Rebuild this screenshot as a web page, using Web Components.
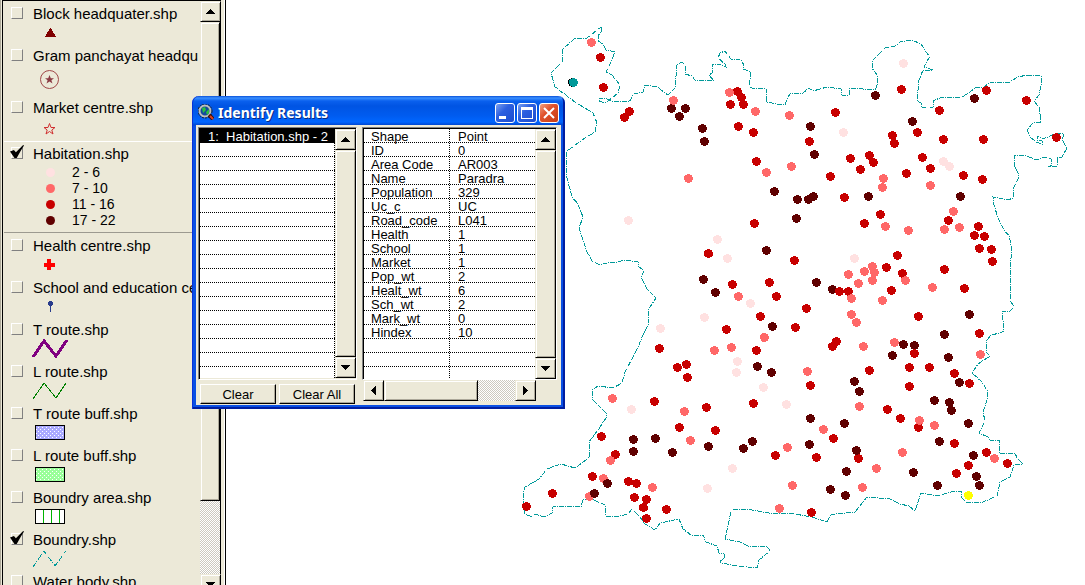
<!DOCTYPE html>
<html lang="en">
<head>
<meta charset="utf-8">
<title>Habitation map</title>
<style>
  html, body { margin: 0; height: 100%; overflow: hidden; background: #fff; }
  body { font-family: "Liberation Sans", Arial, sans-serif; font-size: 15px; color: #000; }
</style>
</head>
<body>
<gis-workspace>
  <legend-panel slot="legend">
    <legend-layer label="Block headquater.shp">
      <svg width="36" height="22" shape-rendering="crispEdges"><path d="M18 4h1l5 9H13z" fill="#800000"/></svg>
    </legend-layer>
    <legend-layer label="Gram panchayat headqu" tall>
      <svg width="36" height="32"><circle cx="17.500" cy="13.500" r="9" fill="none" stroke="#a04848"/><path d="M17.500 9l1.300 3.200h3.200l-2.600 2.100 1.100 3.200-3-2-3 2 1.100-3.200L13 12.200h3.200z" fill="#8c3c44"/></svg>
    </legend-layer>
    <legend-layer label="Market centre.shp">
      <svg width="36" height="22"><path d="M17.500 5.500l1.500 4h4l-3.200 2.500 1.200 4-3.500-2.500L14 16l1.200-4L12 9.500h4z" fill="none" stroke="#d03030"/></svg>
    </legend-layer>
    <legend-layer label="Habitation.shp" checked active>
      <legend-class color="#ffe1e1">2 - 6</legend-class>
      <legend-class color="#ff6868">7 - 10</legend-class>
      <legend-class color="#c80000">11 - 16</legend-class>
      <legend-class color="#600000">17 - 22</legend-class>
    </legend-layer>
    <legend-layer label="Health centre.shp">
      <svg width="36" height="22" shape-rendering="crispEdges"><path d="M15 3h4v4h4v4h-4v3h-4v-3h-3V7h3z" fill="#f00"/></svg>
    </legend-layer>
    <legend-layer label="School and education ce">
      <svg width="36" height="22" shape-rendering="crispEdges"><path d="M17 3h3v1h1v3h-1v1h-1v6h-1V8h-1V7h-1V4h1z" fill="#283c8c"/></svg>
    </legend-layer>
    <legend-layer label="T route.shp">
      <svg width="36" height="22" shape-rendering="crispEdges"><path d="M1 17L12 1l12 15L35 0" fill="none" stroke="#800080" stroke-width="3"/></svg>
    </legend-layer>
    <legend-layer label="L route.shp">
      <svg width="36" height="22" shape-rendering="crispEdges"><path d="M1 17L12 1l12 15L34 1" fill="none" stroke="#008000"/></svg>
    </legend-layer>
    <legend-layer label="T route buff.shp">
      <svg width="36" height="22" shape-rendering="crispEdges"><defs><pattern id="d" width="4" height="4" patternUnits="userSpaceOnUse"><rect width="4" height="4" fill="#aaaaff"/><path d="M0 1h1v1H0zM2 3h1v1H2z" fill="#fff"/></pattern></defs><path d="M3 1h30v15H3z"/><path d="M4 2h28v13H4z" fill="url(#d)"/></svg>
    </legend-layer>
    <legend-layer label="L route buff.shp">
      <svg width="36" height="22" shape-rendering="crispEdges"><defs><pattern id="g" width="4" height="4" patternUnits="userSpaceOnUse"><rect width="4" height="4" fill="#99ff99"/><path d="M0 1h1v1H0zM2 3h1v1H2z" fill="#fff"/></pattern></defs><path d="M3 1h30v15H3z"/><path d="M4 2h28v13H4z" fill="url(#g)"/></svg>
    </legend-layer>
    <legend-layer label="Boundry area.shp">
      <svg width="36" height="22" shape-rendering="crispEdges"><path d="M3 1h30v15H3z"/><path d="M4 2h28v13H4z" fill="#fff"/><path d="M11 2h1v13h-1zM19 2h1v13h-1zM27 2h1v13h-1z" fill="#00b400"/></svg>
    </legend-layer>
    <legend-layer label="Boundry.shp" checked>
      <svg width="36" height="22" shape-rendering="crispEdges"><path d="M1 17L12 1l11 15L34 1" fill="none" stroke="#009999" stroke-dasharray="5 1 1 2"/></svg>
    </legend-layer>
    <legend-layer label="Water body.shp"></legend-layer>
  </legend-panel>
  <gis-map slot="map"></gis-map>
  <identify-window slot="window" heading="Identify Results"></identify-window>
</gis-workspace>

<script>
const define = (name, html, setup) => {
  const template = document.createElement('template');
  template.innerHTML = html;
  customElements.define(name, class extends HTMLElement {
    constructor() {
      super();
      this.attachShadow({ mode: 'open' }).append(template.content.cloneNode(true));
    }
    connectedCallback() { if (setup) setup(this, this.shadowRoot); }
  });
};

/* Bevelled scroll bar; --thumb and --rest share out the length of the track. */
define('bevel-scroll', `
<style>
  :host { display: flex; flex-direction: column; width: 21px; box-sizing: border-box; }
  :host([horizontal]) { flex-direction: row; width: auto; height: 21px; }
  button, .thumb {
    box-sizing: border-box; margin: 0; padding: 0; background: #ece9d8; border-radius: 0;
    border: 1px solid; border-color: #ece9d8 #000 #000 #ece9d8;
    box-shadow: inset 1px 1px #fff, inset -1px -1px #aca899;
  }
  button { flex: none; width: 21px; height: 21px; display: grid; place-items: center; }
  .thumb { flex: var(--thumb, 1) 1 0px; }
  .rest { flex: var(--rest, 0) 1 0px; background: conic-gradient(#fff 25%, #ccc9bf 0 50%, #fff 0 75%, #ccc9bf 0) 0 0 / 2px 2px; }
  svg { display: block; }
  :host([horizontal]) svg { transform: rotate(-90deg); }
</style>
<button class="a" aria-label="Scroll back"><svg width="9" height="5" shape-rendering="crispEdges"><path d="M4 0h1l4 5H0z"/></svg></button>
<div class="thumb"></div><div class="rest"></div>
<button class="b" aria-label="Scroll on"><svg width="9" height="5" shape-rendering="crispEdges"><path d="M0 0h9L5 5H4z"/></svg></button>`);

define('legend-class', `
<style>
  :host { display: flex; align-items: center; height: 16px; font-size: 14px; line-height: 16px; }
  i { width: 9px; height: 9px; border-radius: 50%; margin: 0 17px 0 14px; }
</style>
<i></i><span><slot></slot></span>`, (host, root) => {
  root.querySelector('i').style.background = host.getAttribute('color');
});

define('legend-layer', `
<style>
  :host { display: block; box-sizing: border-box; min-height: 42px; padding-left: 7px; }
  :host([active]) { margin: 1px 0 3px; padding: 2px 0 4px 7px; border-top: 1px solid #fff; border-bottom: 1px solid #9c9a90; }
  .head { display: flex; align-items: center; gap: 10px; height: 20px; }
  label { line-height: 20px; white-space: nowrap; }
  input { appearance: none; flex: none; box-sizing: border-box; width: 12px; height: 12px; margin: 0 0 2px; border: 1px solid; border-color: #fff #808080 #808080 #fff; position: relative; }
  input:checked::before { content: ""; position: absolute; left: -2px; top: -3px; width: 14px; height: 13px; background: #000; clip-path: polygon(0 50%, 28% 38%, 42% 56%, 94% 0, 100% 4%, 76% 46%, 48% 100%, 32% 100%); }
  .body { padding-left: 21px; }
  ::slotted(svg) { display: block; overflow: visible; }
</style>
<div class="head"><input type="checkbox" id="on"><label for="on"></label></div>
<div class="body"><slot></slot></div>`, (host, root) => {
  root.querySelector('label').textContent = host.getAttribute('label');
  root.querySelector('input').checked = host.hasAttribute('checked');
});

define('legend-panel', `
<style>
  :host { display: grid; grid-template-columns: 1fr 21px; box-sizing: border-box; width: 226px; height: calc(100% + 10px); background: #ece9d8;
    padding: 0 5px 0 2px; border-right: 0; box-shadow: inset -1px 0 #000, inset -2px 0 #fff, inset 1px 0 #aca899; }
  .list { overflow: hidden; min-width: 0; border-left: 1px solid #000; border-top: 1px solid #000; padding: 3px 0 0 1px; }
  bevel-scroll { --thumb: 478; --rest: 73; border-right: 1px solid #000; border-top: 1px solid #000; width: 21px; }
</style>
<div class="list"><slot></slot></div>
<bevel-scroll></bevel-scroll>`);

const BOUNDARY = `601,27 602,30 598,36 598,41 603,44 606,50 615,52 611,62 606,72 612,75 620,85 618,93 612,98 605,103 599,101 599,98 607,99 612,101 623,101 629,102 634,94 643,92 645,85 657,87 668,95 675,88 677,65 681,62 686,65 685,74 692,76 695,80 707,80 714,81 709,75 712,73 712,64 720,64 726,67 725,64 718,58 720,53 725,51 731,59 740,59 744,65 743,69 751,72 749,86 753,89 760,88 766,89 767,102 777,104 785,105 788,97 791,93 803,93 809,88 813,91 827,87 841,89 842,95 849,95 850,88 875,90 878,83 877,75 872,68 873,60 885,48 895,46 900,42 912,40 921,44 926,52 930,57 927,61 924,67 933,70 923,70 919,80 917,101 921,103 922,108 933,107 933,101 942,97 961,98 977,87 984,87 990,82 1008,83 1018,77 1027,75 1041,76 1041,85 1039,95 1034,101 1039,107 1041,122 1033,123 1027,130 1030,137 1036,142 1042,144 1042,141 1037,140 1037,136 1043,139 1057,133 1064,134 1062,140 1067,148 1062,157 1057,157 1057,166 1048,167 1052,165 1051,159 1045,157 1037,160 1023,155 1015,155 1014,165 1018,173 1018,179 1014,187 1013,198 1008,200 993,197 994,205 998,218 1005,232 1009,235 1012,250 1010,267 1010,300 1014,307 1010,311 1002,311 1004,331 1000,333 991,335 987,340 986,352 990,356 978,364 972,373 982,382 988,392 987,400 983,412 985,421 979,433 988,437 990,440 999,440 1000,454 1015,453 1017,458 1023,464 1014,465 1010,477 1000,482 997,496 983,502 966,502 961,497 962,492 954,491 938,496 921,493 915,511 909,506 900,504 890,499 867,497 855,512 836,514 831,514 827,522 812,517 789,513 774,514 752,510 735,509 731,512 725,539 740,542 750,547 767,546 770,551 759,560 757,568 738,566 721,563 720,561 725,558 724,554 719,553 717,546 706,542 703,535 691,535 683,529 679,519 660,523 655,530 645,524 640,517 632,509 628,514 615,517 606,516 605,505 594,500 583,499 581,507 566,506 553,507 552,513 544,517 535,514 532,517 525,514 523,495 525,487 539,479 547,469 561,464 575,468 590,457 589,442 598,430 606,418 606,413 593,400 592,390 598,386 613,388 622,383 625,372 633,357 639,345 642,337 649,323 648,310 656,298 647,289 641,277 644,271 638,266 638,262 625,260 614,263 610,262 600,265 592,261 587,252 583,240 579,228 583,217 578,204 572,197 567,178 566,165 567,151 582,140 595,132 597,123 593,113 575,102 555,87 551,73 562,62 562,50 575,38 587,38`;

const HABITATIONS = [
  ['#600000', `671,108 685,108 679,116 702,128 704,141 810,126 814,154 774,191 797,199 808,199 813,196 868,196 875,95 796,218 974,98 912,121 960,196 766,250 703,279 715,292 816,282 832,289 772,326 757,366 771,372 969,314 944,334 903,344 914,345 892,355 948,357 854,381 859,391 959,382 934,400 949,402 951,410 633,439 633,451 655,438 672,452 708,446 743,448 752,441 607,483 810,418 844,423 809,444 846,471 830,489 845,495 939,441 913,472 937,485 968,423 973,455 976,476 979,485`],
  ['#c80000', `600,57 603,87 629,111 624,117 737,91 741,97 730,104 743,104 835,112 738,126 753,132 809,141 756,161 850,158 869,155 873,162 860,169 830,176 844,197 880,214 892,135 894,143 901,89 986,90 1026,100 939,110 917,132 943,139 983,139 1056,137 922,157 930,168 906,173 963,175 982,179 948,220 978,226 974,235 984,236 979,248 991,249 992,261 897,255 902,273 944,269 754,223 708,253 794,260 732,284 769,282 776,296 806,308 760,316 726,329 795,327 756,350 659,348 677,367 686,364 687,377 810,385 864,223 886,267 839,291 848,291 891,290 964,288 918,316 979,333 836,341 832,346 914,353 909,367 929,367 869,370 909,386 954,373 969,383 887,409 654,401 706,407 753,403 679,427 715,430 601,436 615,454 592,476 628,481 636,483 634,497 646,499 643,507 666,509 646,518 552,493 526,506 775,455 811,512 833,438 816,457 858,458 900,418 918,427 954,443 956,473 968,465 986,452 1007,463`],
  ['#ff6868', `591,42 673,100 688,178 729,92 755,111 789,115 766,172 791,166 883,178 882,187 930,185 953,211 944,229 959,227 908,230 905,280 738,296 764,337 714,350 731,347 807,371 885,226 872,266 864,271 874,272 848,274 872,280 858,283 851,298 882,300 932,287 851,314 856,322 863,346 894,342 980,354 859,406 612,398 684,411 690,440 610,460 603,478 652,487 589,496 787,447 792,485 779,508 823,429 876,468 862,487 919,420 934,425 902,452 994,458`],
  ['#ffe1e1', `843,132 903,63 943,161 949,166 628,220 717,239 727,258 750,303 704,317 660,328 737,361 736,372 763,387 854,258 631,409 786,404 732,468 707,488`],
  ['#600000', `594,493 607,483 856,450`],
  ['#ffff00', `968,495`],
  ['#000000', `572,82`],
  ['#009999', `573,82`]
];

define('gis-map', `
<style>
  :host { display: block; min-width: 0; height: 100%; overflow: hidden; background: #fff; }
  svg { display: block; width: 100%; height: 100%; }
</style>
<svg viewBox="226 0 859 585" preserveAspectRatio="xMinYMin meet" shape-rendering="crispEdges" role="img" aria-label="Habitations within the boundary">
  <polygon fill="none" stroke="#009999" stroke-dasharray="5 1 1 1"/>
</svg>`, (host, root) => {
  const svg = root.querySelector('svg');
  root.querySelector('polygon').setAttribute('points', BOUNDARY);
  for (const [fill, points] of HABITATIONS) {
    for (const point of points.split(' ')) {
      const [x, y] = point.split(',').map(Number);
      const dot = document.createElementNS('http://www.w3.org/2000/svg', 'circle');
      dot.setAttribute('cx', x + 0.5);
      dot.setAttribute('cy', y + 0.5);
      dot.setAttribute('r', 4.5);
      dot.setAttribute('fill', fill);
      svg.append(dot);
    }
  }
});

const GRID_STYLE = `
  :host { display: flex; overflow: hidden; min-width: 0; background: #fff; font-size: 13px; }
  .view { flex: 1; min-width: 0; overflow: hidden; }
  table { width: 100%; border-collapse: collapse; table-layout: fixed; }
  td { box-sizing: border-box; height: 14px; padding: 2px 0 0; line-height: 12px; white-space: pre;
    background: repeating-linear-gradient(90deg, #000 0 1px, #fff 1px 2px) 0 100% / 100% 1px no-repeat; }
  .edge { background: repeating-linear-gradient(90deg, #000 0 1px, #fff 1px 2px) 0 100% / 100% 1px no-repeat,
    repeating-linear-gradient(#000 0 1px, #fff 1px 2px) 100% 0 / 1px 100% no-repeat; }
`;

define('result-list', `
<style>${GRID_STYLE}
  td { padding-left: 8px; }
  .on { background: #000; color: #fff; }
</style>
<div class="view"><table><tbody></tbody></table></div>`, (host, root) => {
  const body = root.querySelector('tbody');
  for (let i = 0; i < 18; i++) {
    const cell = body.insertRow().insertCell();
    cell.className = i ? 'edge' : 'on';
    if (!i) cell.textContent = '1:  Habitation.shp - 2';
  }
});

const FIELDS = [['Shape', 'Point'], ['ID', '0'], ['Area Code', 'AR003'], ['Name', 'Paradra'], ['Population', '329'], ['Uc_c', 'UC'], ['Road_code', 'L041'], ['Health', '1'], ['School', '1'], ['Market', '1'], ['Pop_wt', '2'], ['Healt_wt', '6'], ['Sch_wt', '2'], ['Mark_wt', '0'], ['Hindex', '10'], ['', ''], ['', ''], ['', '']];

define('field-table', `
<style>${GRID_STYLE}
  td { padding-left: 8px; }
  td:first-child { padding-left: 7px; }
  col:first-child { width: 86px; }
</style>
<div class="view"><table><colgroup><col><col></colgroup><tbody></tbody></table></div>`, (host, root) => {
  const body = root.querySelector('tbody');
  for (const [name, value] of FIELDS) {
    const row = body.insertRow();
    const key = row.insertCell();
    key.className = 'edge';
    key.textContent = name;
    row.insertCell().textContent = value;
  }
});

define('identify-window', `
<style>
  :host { display: flex; flex-direction: column; box-sizing: border-box; width: 373px; height: 313px; padding: 0 4px 4px;
    border-radius: 7px 7px 0 0; overflow: hidden;
    background: linear-gradient(#0a50d8, #3a90ff 2px, #0a60ee 5px, #0054e3 10px, #005cf0 20px, #0066ff 26px, #0046d0 29px, #0a50e4 30px);
    box-shadow: inset 1px 0 #0831d9, inset -2px -2px #001ea0; }
  header { display: flex; align-items: center; gap: 2px; height: 29px; padding: 2px 2px 0; box-sizing: border-box; flex: none; }
  h1 { flex: 1; margin: 2px 0 0 2px; font: 700 14px/20px "Noto Sans", "Open Sans", sans-serif; color: #fff; text-shadow: 1px 1px #0a2a80; }
  header button { width: 20px; height: 20px; padding: 0; margin: 2px 0 0; box-sizing: border-box; border: 1px solid #fff; border-radius: 3px; background: linear-gradient(135deg, #7ba0f0, #2c5fe0 40%, #1c4ccf); display: grid; place-items: center; }
  header .close { background: linear-gradient(135deg, #f0a080, #e0522c 40%, #c83c14); }
  main { flex: 1; min-height: 0; display: grid; grid-template-columns: 159px 195px; gap: 5px; padding: 2px; background: #ece9d8; font-size: 13px; }
  .left, .right { display: flex; flex-direction: column; min-width: 0; }
  .pane { display: flex; box-sizing: border-box; height: 253px; border: 1px solid; border-color: #808080 #fff #fff #808080; box-shadow: inset 1px 1px #000; padding: 1px 0 0 1px; }
  .left .pane { padding-bottom: 1px; }
  .pane > :first-child { flex: 1; }
  .right bevel-scroll[horizontal] { margin: 0 21px 0 1px; --thumb: 94; --rest: 38; }
  .actions { display: grid; grid-template-columns: 76px 76px; gap: 3px; padding: 4px 0 0 2px; }
  .actions button { height: 20px; box-sizing: border-box; padding: 0; border: 1px solid; border-color: #fff #000 #000 #fff; border-radius: 0; background: #ece9d8; box-shadow: inset -1px -1px #aca899; font: 13px/20px "Liberation Sans", Arial, sans-serif; color: #000; }
</style>
<header>
  <svg width="16" height="16"><circle cx="7" cy="7" r="5.500" fill="#144a9c" stroke="#c0c0b8" stroke-width="2"/><circle cx="7" cy="7" r="7" fill="none" stroke="#222" stroke-width="1" stroke-dasharray="2 1"/><path d="M4 4l3-1 1 3-3 3zM8 8l3-3v4l-2 2z" fill="#28c040"/><path d="M11 11l4 4" stroke="#301010" stroke-width="4"/><path d="M12 12l3 3" stroke="#e04020" stroke-width="2"/></svg>
  <h1></h1>
  <button aria-label="Minimize"><svg width="18" height="18" shape-rendering="crispEdges"><path d="M3 12h7v3H3z" fill="#fff"/></svg></button>
  <button aria-label="Maximize"><svg width="18" height="18" shape-rendering="crispEdges"><path fill-rule="evenodd" d="M3 3h12v12H3zM4 6v8h10V6z" fill="#fff"/></svg></button>
  <button class="close" aria-label="Close"><svg width="18" height="18"><path d="M4 4l10 10M14 4L4 14" stroke="#fff" stroke-width="2"/></svg></button>
</header>
<main>
  <div class="left">
    <div class="pane"><result-list></result-list><bevel-scroll></bevel-scroll></div>
    <div class="actions"><button>Clear</button><button>Clear All</button></div>
  </div>
  <div class="right">
    <div class="pane"><field-table></field-table><bevel-scroll></bevel-scroll></div>
    <bevel-scroll horizontal></bevel-scroll>
  </div>
</main>`, (host, root) => {
  root.querySelector('h1').textContent = host.getAttribute('heading');
});

define('gis-workspace', `
<style>
  :host { display: grid; grid-template-columns: 226px minmax(0, 1fr); grid-template-rows: 100%; height: 100vh; position: relative; overflow: hidden; }
  ::slotted(identify-window) { position: absolute; left: 192px; top: 96px; }
</style>
<slot name="legend"></slot>
<slot name="map"></slot>
<slot name="window"></slot>`);
</script>
</body>
</html>
